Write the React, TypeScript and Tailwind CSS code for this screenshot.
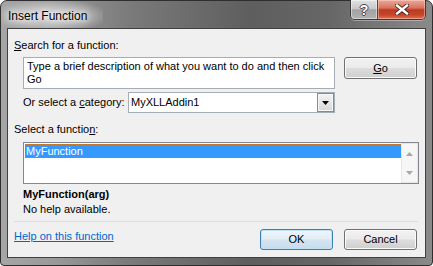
import React from "react";

function StdButton({
  children,
  focused = false,
  className = "",
}: {
  children: React.ReactNode;
  focused?: boolean;
  className?: string;
}) {
  return (
    <div
      className={
        "w-[73px] flex items-center justify-center rounded-[3px] border text-[11px] leading-[13px] text-black " +
        (focused
          ? "border-[#3c7fb1] shadow-[inset_0_0_0_1px_#bfe4f7] bg-[linear-gradient(180deg,#eef5fa_0%,#e4eef6_48%,#d4e4f0_52%,#c9dcec_100%)] "
          : "border-[#707070] shadow-[inset_0_0_0_1px_#fbfbfb] bg-[linear-gradient(180deg,#f2f2f2_0%,#ebebeb_48%,#dddddd_52%,#cfcfcf_100%)] ") +
        className
      }
    >
      {children}
    </div>
  );
}

export default function App() {
  return (
    <div className="w-[433px] h-[266px] bg-white font-['Liberation_Sans',Arial,sans-serif]">
      <div className="w-[433px] h-[266px] flex flex-col rounded-t-[7px] rounded-b-[4px] border border-[#2e2e2e] bg-[linear-gradient(90deg,#a6a6a6_0%,#9a9a9a_12%,#7a7a7a_30%,#5e5e5e_58%,#666666_76%,#8a8a8a_100%)] px-[6px] pb-[7px]">
        {/* Title bar */}
        <div className="h-[27px] flex items-start justify-between">
          <div className="-ml-[6px] pl-[7px] pr-[16px] h-[27px] pt-[8px] text-[12px] leading-[14px] text-black bg-[radial-gradient(ellipse_at_50%_55%,rgba(235,235,235,0.75)_0%,rgba(220,220,220,0.35)_55%,rgba(200,200,200,0)_80%)] [text-shadow:0_0_5px_#fff,0_0_9px_#fff,0_0_14px_#fff]">
            Insert Function
          </div>
          <div className="mt-[-1px] flex h-[20px] rounded-b-[5px] border border-t-0 border-[#3a3a3a] shadow-[0_1px_0_rgba(255,255,255,0.35)]">
            <div className="w-[27px] h-full flex items-center justify-center rounded-bl-[4px] border-r border-[#4a4a4a] bg-[linear-gradient(180deg,#e2e2e2_0%,#c8c8c8_45%,#a2a2a2_52%,#b2b2b2_100%)] shadow-[inset_0_0_0_1px_rgba(255,255,255,0.45)]">
              <span className="text-[14px] leading-[14px] font-bold text-white [text-shadow:1px_0_0_#444,-1px_0_0_#444,0_1px_0_#444,0_-1px_0_#444]">
                ?
              </span>
            </div>
            <div className="w-[47px] h-full flex items-center justify-center rounded-br-[4px] bg-[linear-gradient(180deg,#eaa898_0%,#d8735f_42%,#bd3a22_52%,#c6452a_78%,#e07352_100%)] shadow-[inset_0_0_0_1px_rgba(255,220,210,0.45)]">
              <svg width="14" height="11" viewBox="0 0 14 11">
                <path d="M2 1.5 L12 9.5 M12 1.5 L2 9.5" stroke="#4a2018" strokeWidth="4.2" strokeLinecap="square" fill="none" />
                <path d="M2 1.5 L12 9.5 M12 1.5 L2 9.5" stroke="#ffffff" strokeWidth="2.4" strokeLinecap="square" fill="none" />
              </svg>
            </div>
          </div>
        </div>

        {/* Client area */}
        <div className="flex-1 border border-[#404040] bg-[#f0f0f0] flex flex-col text-[11px] leading-[13px] text-black">
          <div className="mt-[10px] pl-[6px] h-[13px]">
            <span className="underline">S</span>earch for a function:
          </div>

          <div className="mt-[5px] flex items-start">
            <div className="ml-[15px] w-[312px] h-[32px] border border-[#a7adb5] bg-white pl-[3px] pt-[2px] whitespace-nowrap overflow-hidden">
              Type a brief description of what you want to do and then click
              <br />
              Go
            </div>
            <StdButton className="ml-[9px] h-[22px]">
              <span>
                <span className="underline">G</span>o
              </span>
            </StdButton>
          </div>

          <div className="mt-[3px] flex items-center h-[21px]">
            <div className="ml-[15px] w-[105px]">
              Or select a <span className="underline">c</span>ategory:
            </div>
            <div className="w-[207px] h-[21px] border border-[#a7adb5] bg-white flex items-stretch">
              <div className="flex-1 pl-[2px] flex items-center">MyXLLAddin1</div>
              <div className="w-[17px] flex items-center justify-center border border-[#8a8a8a] shadow-[inset_0_0_0_1px_#f8f8f8] bg-[linear-gradient(180deg,#f3f3f3_0%,#e6e6e6_50%,#d6d6d6_100%)]">
                <svg width="7" height="4" viewBox="0 0 7 4">
                  <path d="M0 0 H7 L3.5 4 Z" fill="#000" />
                </svg>
              </div>
            </div>
          </div>

          <div className="mt-[10px] pl-[6px] h-[13px]">
            Select a functio<span className="underline">n</span>:
          </div>

          <div className="mt-[6px] ml-[15px] w-[396px] h-[42px] border border-[#828790] bg-white flex items-start">
            <div className="ml-[1px] mt-[1px] w-[376px] h-[14px] bg-[#3399ff] border border-dotted border-[#c8782c] text-white leading-[12px]">
              MyFunction
            </div>
            <div className="w-[17px] h-full border border-[#e6e6e6] bg-[#f6f6f6] flex flex-col items-center justify-between pt-[8px] pb-[7px]">
              <svg width="7" height="4" viewBox="0 0 7 4">
                <path d="M3.5 0 L7 4 H0 Z" fill="#a8a8a8" />
              </svg>
              <svg width="7" height="4" viewBox="0 0 7 4">
                <path d="M0 0 H7 L3.5 4 Z" fill="#a8a8a8" />
              </svg>
            </div>
          </div>

          <div className="mt-[4px] pl-[15px] h-[13px] font-bold">MyFunction(arg)</div>
          <div className="mt-[2px] pl-[15px] h-[13px]">No help available.</div>

          <div className="mt-[5px] ml-[6px] w-[404px] h-[1px] bg-[#d5dfe5]" />

          <div className="mt-[7px] flex items-start pl-[6px] pr-[8px]">
            <div className="mt-[1px] text-[#0066cc] underline">Help on this function</div>
            <div className="ml-auto flex gap-[11px]">
              <StdButton focused className="h-[21px]">OK</StdButton>
              <StdButton className="h-[21px]">Cancel</StdButton>
            </div>
          </div>
        </div>
      </div>
    </div>
  );
}
